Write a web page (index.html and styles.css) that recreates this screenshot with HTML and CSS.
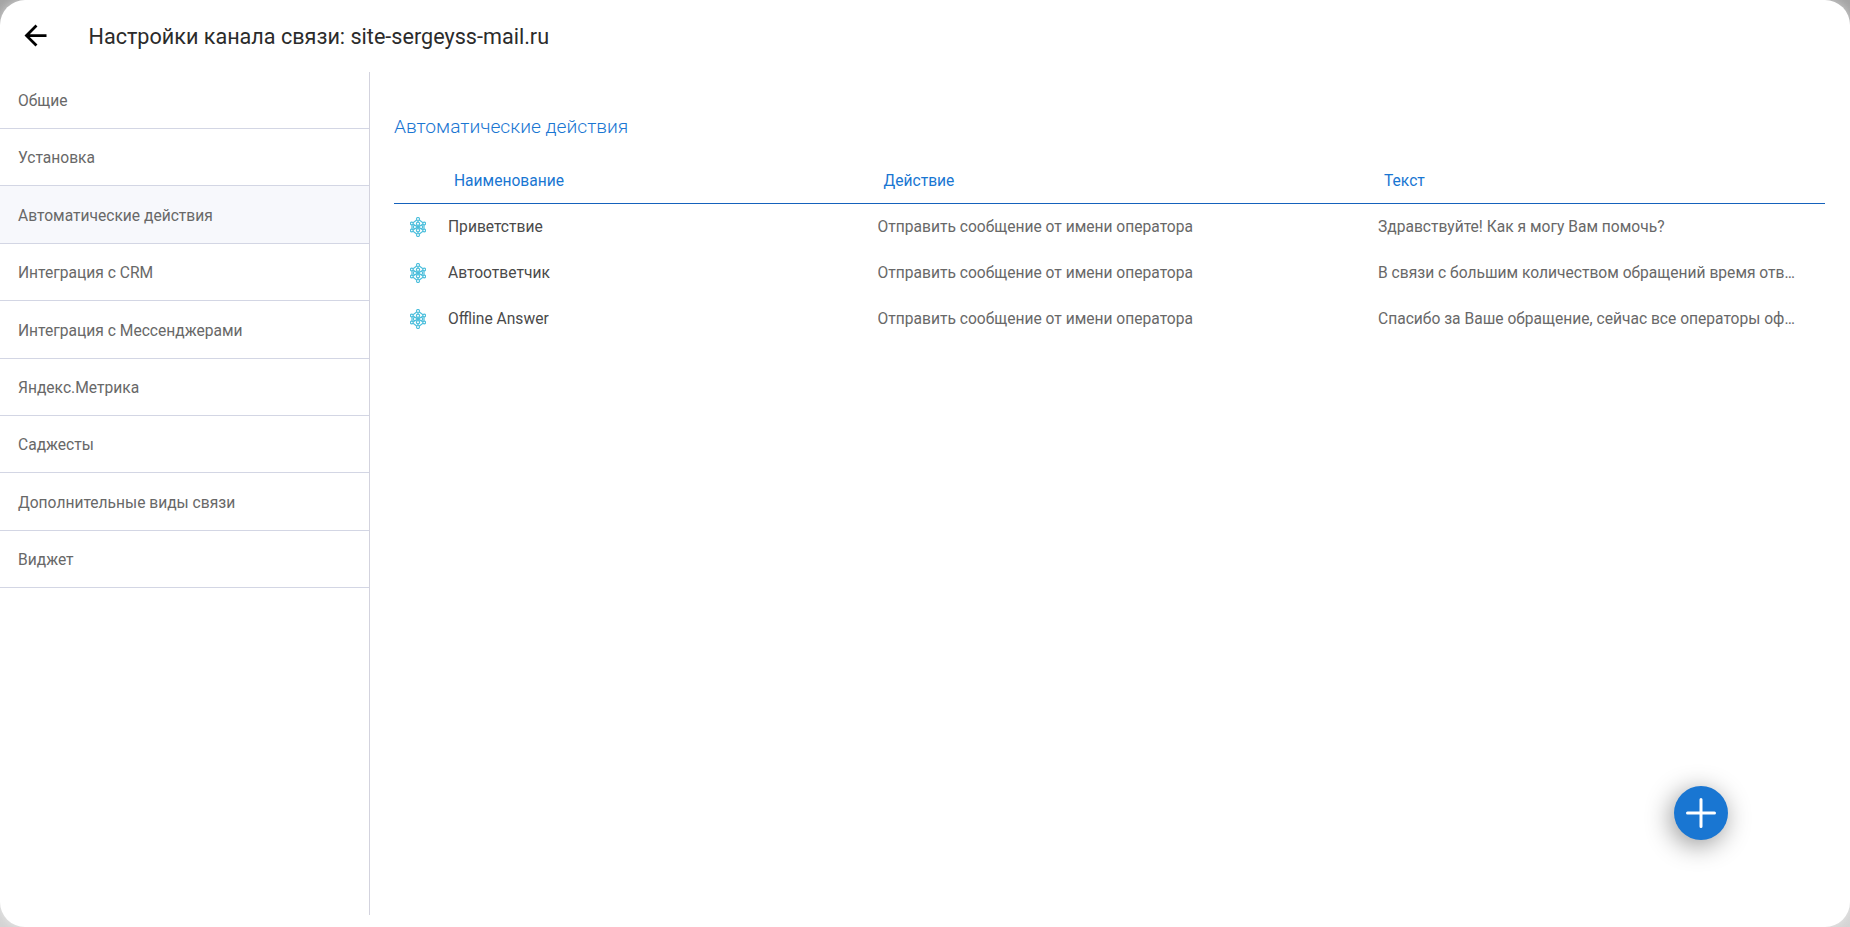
FILE: index.html
```html
<!DOCTYPE html>
<html lang="ru">
<head>
<meta charset="utf-8">
<title>Настройки канала связи</title>
<link rel="stylesheet" href="styles.css">
</head>
<body>
<svg class="defs" width="0" height="0" aria-hidden="true">
  <symbol id="net" viewBox="0 0 16 20">
    <g fill="none" stroke="#4dbfdc" stroke-width="1.200">
      <path d="M8 2 2 6.500v7L8 18l6-4.500v-7z"/>
      <path d="M8 2v16M2 6.500 14 13.500M14 6.500 2 13.500"/>
      <circle cx="8" cy="2" r="1.500" fill="#fff"/>
      <circle cx="8" cy="18" r="1.500" fill="#fff"/>
      <circle cx="1.800" cy="6.500" r="1.400" fill="#fff"/>
      <circle cx="14.200" cy="6.500" r="1.400" fill="#fff"/>
      <circle cx="1.800" cy="13.500" r="1.400" fill="#fff"/>
      <circle cx="14.200" cy="13.500" r="1.400" fill="#fff"/>
      <circle cx="8" cy="6.800" r="1.600" fill="#fff"/>
      <circle cx="8" cy="13.200" r="1.600" fill="#fff"/>
      <circle cx="4.900" cy="10" r="1.600" fill="#fff"/>
      <circle cx="11.100" cy="10" r="1.600" fill="#fff"/>
    </g>
  </symbol>
</svg>
<div class="app">
  <header class="topbar">
    <svg class="back" viewBox="0 0 24 24"><path d="M20 11H7.830l5.590-5.590L12 4l-8 8 8 8 1.410-1.410L7.830 13H20v-2z" fill="#000"/></svg>
    <h1 class="title">Настройки канала связи: site-sergeyss-mail.ru</h1>
  </header>
  <div class="body">
    <nav class="sidebar">
      <a class="nav-item">Общие</a>
      <a class="nav-item">Установка</a>
      <a class="nav-item active">Автоматические действия</a>
      <a class="nav-item">Интеграция с CRM</a>
      <a class="nav-item">Интеграция с Мессенджерами</a>
      <a class="nav-item">Яндекс.Метрика</a>
      <a class="nav-item">Саджесты</a>
      <a class="nav-item">Дополнительные виды связи</a>
      <a class="nav-item">Виджет</a>
    </nav>
    <main class="content">
      <h2 class="section-title">Автоматические действия</h2>
      <div class="table">
        <div class="row head">
          <div class="cell-icon"></div>
          <div class="cell name">Наименование</div>
          <div class="cell action">Действие</div>
          <div class="cell text">Текст</div>
        </div>
        <div class="row">
          <div class="cell-icon"><svg class="net"><use href="#net"/></svg></div>
          <div class="cell name">Приветствие</div>
          <div class="cell action">Отправить сообщение от имени оператора</div>
          <div class="cell text">Здравствуйте! Как я могу Вам помочь?</div>
        </div>
        <div class="row">
          <div class="cell-icon"><svg class="net"><use href="#net"/></svg></div>
          <div class="cell name">Автоответчик</div>
          <div class="cell action">Отправить сообщение от имени оператора</div>
          <div class="cell text">В связи с большим количеством обращений время отв…</div>
        </div>
        <div class="row">
          <div class="cell-icon"><svg class="net"><use href="#net"/></svg></div>
          <div class="cell name">Offline Answer</div>
          <div class="cell action">Отправить сообщение от имени оператора</div>
          <div class="cell text">Спасибо за Ваше обращение, сейчас все операторы оф…</div>
        </div>
      </div>
    </main>
  </div>
  <button class="fab" aria-label="Добавить"><svg viewBox="0 0 30 30"><path d="M15 1.500v27M1.500 15h27" stroke="#fff" stroke-width="3" stroke-linecap="round"/></svg></button>
</div>
</body>
</html>
```
FILE: styles.css
```css
* { box-sizing: border-box; }
html, body { margin: 0; height: 100%; }
body { background: linear-gradient(#a4a4a4, #d4d4d4); font-family: Roboto, sans-serif; overflow: hidden; }
.defs { position: absolute; }
.app { position: relative; height: 927px; background: #fff; border-radius: 25px; display: flex; flex-direction: column; box-shadow: 0 0 10px rgba(255,255,255,.5); }
.topbar { height: 72px; display: flex; align-items: center; padding-left: 18.5px; flex: none; }
.back { width: 33px; height: 33px; flex: none; margin-top: -1px; }
.title { margin: 0 0 0 37px; font-size: 21.6px; font-weight: 400; color: #2b2b2b; }
.body { display: flex; height: 843px; }
.sidebar { width: 370px; flex: none; border-right: 1px solid #d3d3de; }
.nav-item { display: flex; align-items: center; height: 57.4px; padding: 2.6px 0 0 18px; font-size: 15.6px; color: #686868; border-bottom: 1px solid #d3d6e4; }
.nav-item:first-child { margin-top: -.4px; }
.nav-item.active { background: #f7f8fc; }
.content { flex: 1; padding: 43px 25px 0 24px; }
.section-title { margin: 0 0 20px; font-size: 19.2px; font-weight: 300; color: #1976d2; line-height: 24px; }
.table { display: flex; flex-direction: column; }
.row { display: flex; align-items: center; height: 46px; font-size: 15.6px; }
.row.head { height: 45px; border-bottom: 1px solid #1562bc; color: #1976d2; }
.cell-icon { width: 54px; flex: none; display: flex; justify-content: center; padding-right: 6px; }
.net { width: 16px; height: 20px; }
.cell { white-space: nowrap; overflow: hidden; }
.name { width: 429.5px; flex: none; color: #4a4a4a; }
.action { width: 500.5px; flex: none; color: #686868; }
.text { width: 419px; flex: none; color: #686868; }
.head .cell { color: #1976d2; padding-left: 6px; }
.fab { position: absolute; left: 1674px; top: 786px; width: 54px; height: 54px; padding: 12px; border: 0; border-radius: 50%; background: #1976d2; box-shadow: -3px 5px 26px rgba(0,0,0,.42); }
.fab svg { display: block; width: 30px; height: 30px; }
```
